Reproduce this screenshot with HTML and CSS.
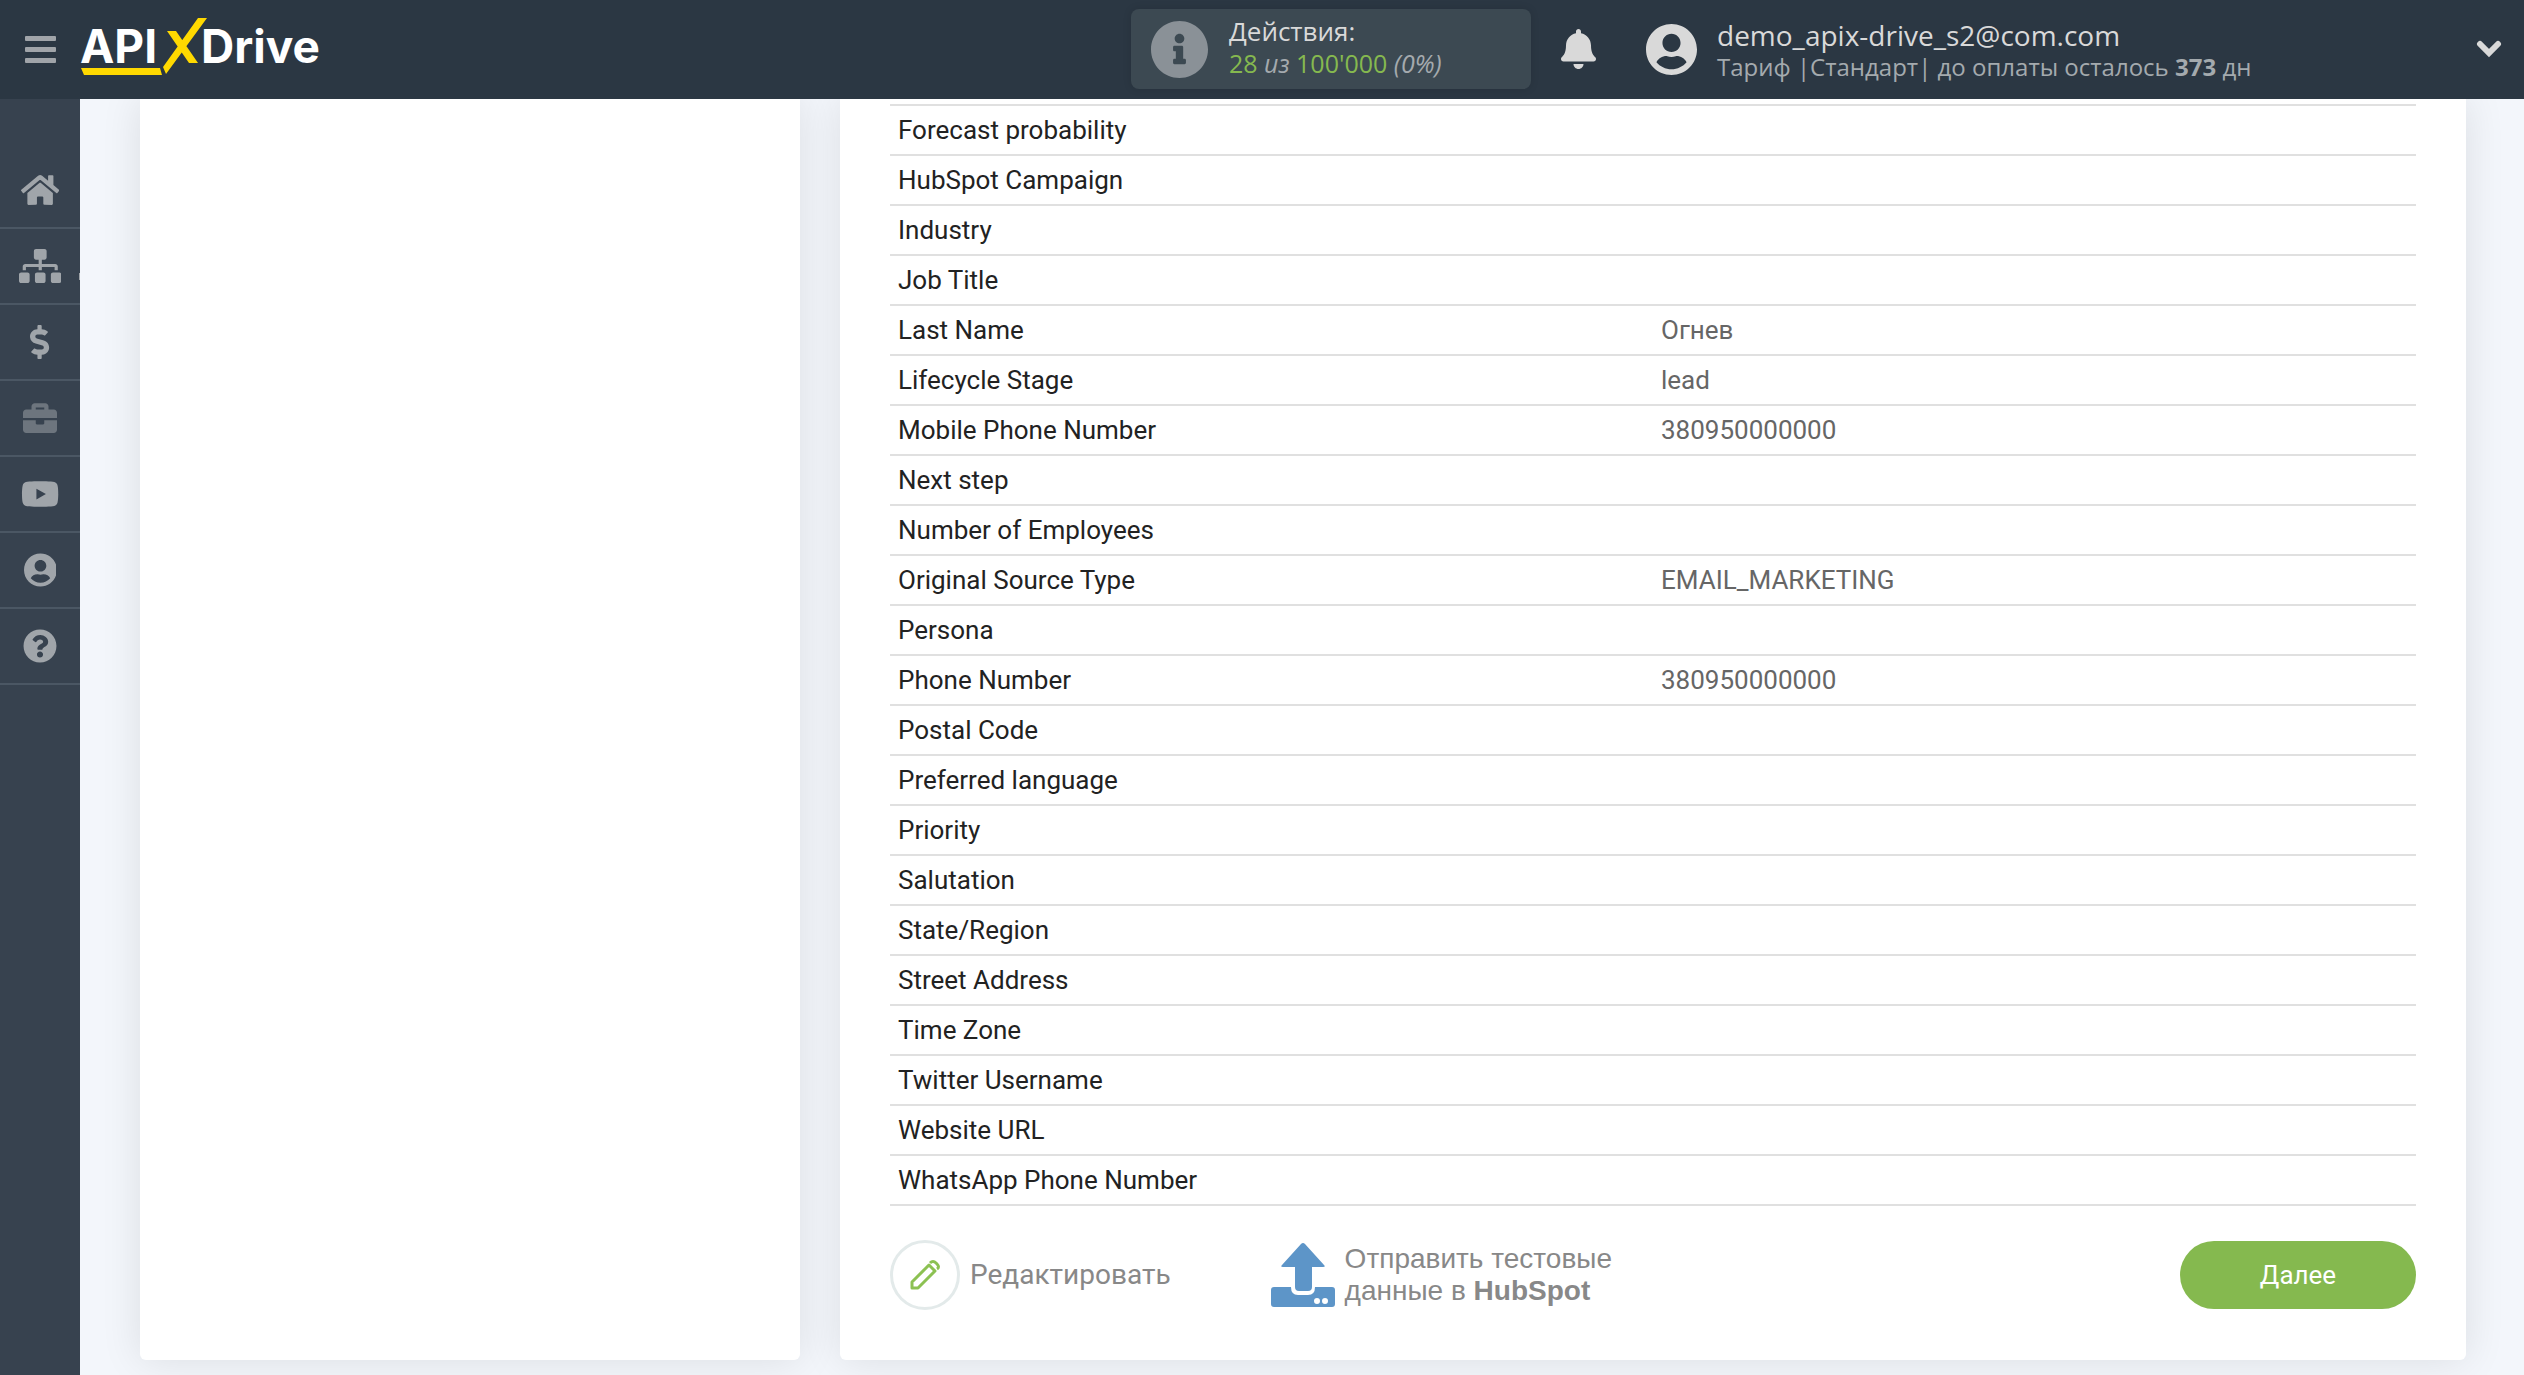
FILE: index.html
```html
<!DOCTYPE html>
<html lang="ru">
<head>
<meta charset="utf-8">
<title>ApiX-Drive</title>
<link rel="stylesheet" href="styles.css">
</head>
<body>
<header class="topbar">
  <button class="burger" type="button" aria-label="Меню"><span></span><span></span><span></span></button>
  <a class="logo" href="#" aria-label="APIX-Drive">
    <svg viewBox="0 0 246 60" width="246" height="60">
      <text class="logo-text" x="0" y="44">API</text>
      <path class="logo-accent" d="M87 12h9l22 32h-9zM118 -1h9L86 55l-3-7zM1 49h79l2 7H4z"/>
      <text class="logo-text" x="121" y="44">Drive</text>
    </svg>
  </a>
  <div class="usage">
    <svg class="usage-icon" viewBox="8 8 496 496"><path d="M256 8C119.043 8 8 119.083 8 256c0 136.997 111.043 248 248 248s248-111.003 248-248C504 119.083 392.957 8 256 8zm0 110c23.196 0 42 18.804 42 42s-18.804 42-42 42-42-18.804-42-42 18.804-42 42-42zm56 254c0 6.627-5.373 12-12 12h-88c-6.627 0-12-5.373-12-12v-24c0-6.627 5.373-12 12-12h12v-64h-12c-6.627 0-12-5.373-12-12v-24c0-6.627 5.373-12 12-12h64c6.627 0 12 5.373 12 12v100h12c6.627 0 12 5.373 12 12v24z"/></svg>
    <div class="usage-text">
      <div class="line-main">Действия:</div>
      <div class="line-sub"><b class="count">28</b> <i>из</i> <b class="count">100'000</b> <i>(0%)</i></div>
    </div>
  </div>
  <button class="bell" type="button" aria-label="Уведомления"><svg viewBox="0 0 448 512"><path d="M224 512c35.32 0 63.97-28.65 63.97-64H160.03c0 35.35 28.65 64 63.97 64zm215.39-149.71c-19.32-20.76-55.47-51.99-55.47-154.29 0-77.7-54.48-139.9-127.94-155.16V32c0-17.67-14.32-32-31.98-32s-31.98 14.33-31.98 32v20.84C118.56 68.1 64.08 130.3 64.08 208c0 102.3-36.15 133.53-55.47 154.29-6 6.45-8.66 14.16-8.61 21.71.11 16.4 12.98 32 32.1 32h383.8c19.12 0 32-15.6 32.1-32 .05-7.55-2.61-15.27-8.61-21.71z"/></svg></button>
  <div class="account">
    <svg class="avatar" viewBox="0 8 496 496"><path d="M248 8C111 8 0 119 0 256s111 248 248 248 248-111 248-248S385 8 248 8zm0 96c48.6 0 88 39.4 88 88s-39.4 88-88 88-88-39.4-88-88 39.4-88 88-88zm0 344c-58.7 0-111.3-26.6-146.5-68.2 18.8-35.4 55.6-59.8 98.5-59.8 2.4 0 4.8.4 7.1 1.1 13 4.2 26.6 6.9 40.9 6.9 14.3 0 28-2.7 40.9-6.9 2.3-.7 4.7-1.1 7.1-1.1 42.9 0 79.7 24.4 98.5 59.8C359.3 421.4 306.7 448 248 448z"/></svg>
    <div class="account-text">
      <div class="line-main">demo_apix-drive_s2@com.com</div>
      <div class="line-sub">Тариф |Стандарт| до оплаты осталось <b>373</b> дн</div>
    </div>
  </div>
  <button class="expand" type="button" aria-label="Развернуть"><svg viewBox="0 0 26 18"><path d="M4 4l9 9 9-9"/></svg></button>
</header>
<div class="shell">
  <nav class="sidebar">
    <a href="#" aria-label="Главная"><svg viewBox="0 0 576 512"><path d="M280.37 148.26L96 300.11V464a16 16 0 0 0 16 16l112.06-.29a16 16 0 0 0 15.92-16V368a16 16 0 0 1 16-16h64a16 16 0 0 1 16 16v95.64a16 16 0 0 0 16 16.05L464 480a16 16 0 0 0 16-16V300L295.67 148.26a12.19 12.19 0 0 0-15.3 0zM571.6 251.47L488 182.56V44.05a12 12 0 0 0-12-12h-56a12 12 0 0 0-12 12v72.61L318.47 43a48 48 0 0 0-61 0L4.34 251.47a12 12 0 0 0-1.6 16.9l25.5 31A12 12 0 0 0 45.15 301l235.22-193.74a12.19 12.19 0 0 1 15.3 0L530.9 301a12 12 0 0 0 16.9-1.6l25.5-31a12 12 0 0 0-1.7-16.93z"/></svg></a>
    <a class="has-more" href="#" aria-label="Связи"><svg viewBox="0 0 640 512"><path d="M128 352H32c-17.67 0-32 14.33-32 32v96c0 17.67 14.33 32 32 32h96c17.67 0 32-14.33 32-32v-96c0-17.67-14.33-32-32-32zm-24-80h192v48h48v-48h192v48h48v-57.59c0-21.17-17.23-38.41-38.41-38.41H344v-64h40c17.67 0 32-14.33 32-32V32c0-17.67-14.33-32-32-32H256c-17.67 0-32 14.33-32 32v96c0 17.67 14.33 32 32 32h40v64H94.41C73.23 224 56 241.23 56 262.41V320h48v-48zm264 80h-96c-17.67 0-32 14.33-32 32v96c0 17.67 14.33 32 32 32h96c17.67 0 32-14.33 32-32v-96c0-17.67-14.33-32-32-32zm240 0h-96c-17.67 0-32 14.33-32 32v96c0 17.67 14.33 32 32 32h96c17.67 0 32-14.33 32-32v-96c0-17.67-14.33-32-32-32z"/></svg></a>
    <a href="#" aria-label="Оплата"><svg viewBox="0 0 288 512"><path d="M209.2 233.4l-108-31.6C88.7 198.2 80 186.5 80 173.5c0-16.3 13.2-29.5 29.5-29.5h66.3c12.2 0 24.2 3.7 34.2 10.5 6.1 4.1 14.3 3.1 19.5-2l34.8-34c7.1-6.9 6.1-18.4-1.8-24.5C238 74.8 207.4 64.1 176 64V16c0-8.8-7.2-16-16-16h-32c-8.8 0-16 7.2-16 16v48h-2.5C45.8 64-5.4 118.7.5 183.6c4.2 46.1 39.4 83.6 83.8 96.6l102.5 30c12.5 3.7 21.2 15.3 21.2 28.3 0 16.3-13.2 29.5-29.5 29.5h-66.3C100 368 88 364.3 78 357.5c-6.1-4.1-14.3-3.1-19.5 2l-34.8 34c-7.1 6.9-6.1 18.4 1.8 24.5 24.5 19.2 55.1 29.9 86.5 30v48c0 8.8 7.2 16 16 16h32c8.8 0 16-7.2 16-16v-48.2c46.6-.9 90.3-28.6 105.7-72.7 21.5-61.6-14.6-124.8-72.5-141.7z"/></svg></a>
    <a class="muted" href="#" aria-label="Проекты"><svg viewBox="0 0 512 512"><path d="M320 336c0 8.84-7.16 16-16 16h-96c-8.84 0-16-7.16-16-16v-48H0v144c0 25.6 22.4 48 48 48h416c25.6 0 48-22.4 48-48V288H320v48zm144-208h-80V80c0-25.6-22.4-48-48-48H176c-25.6 0-48 22.4-48 48v48H48c-25.6 0-48 22.4-48 48v80h512v-80c0-25.6-22.4-48-48-48zm-144 0H192V96h128v32z"/></svg></a>
    <a href="#" aria-label="Видео"><svg viewBox="0 0 576 512"><path d="M549.655 124.083c-6.281-23.65-24.787-42.276-48.284-48.597C458.781 64 288 64 288 64S117.22 64 74.629 75.486c-23.497 6.322-42.003 24.947-48.284 48.597-11.412 42.867-11.412 132.305-11.412 132.305s0 89.438 11.412 132.305c6.281 23.65 24.787 41.5 48.284 47.821C117.22 448 288 448 288 448s170.78 0 213.371-11.486c23.497-6.321 42.003-24.171 48.284-47.821 11.412-42.867 11.412-132.305 11.412-132.305s0-89.438-11.412-132.305zm-317.51 213.508V175.185l142.739 81.205-142.739 81.201z"/></svg></a>
    <a href="#" aria-label="Профиль"><svg viewBox="0 0 496 512"><path d="M248 8C111 8 0 119 0 256s111 248 248 248 248-111 248-248S385 8 248 8zm0 96c48.6 0 88 39.4 88 88s-39.4 88-88 88-88-39.4-88-88 39.4-88 88-88zm0 344c-58.7 0-111.3-26.6-146.5-68.2 18.8-35.4 55.6-59.8 98.5-59.8 2.4 0 4.8.4 7.1 1.1 13 4.2 26.6 6.9 40.9 6.9 14.3 0 28-2.7 40.9-6.9 2.3-.7 4.7-1.1 7.1-1.1 42.9 0 79.7 24.4 98.5 59.8C359.3 421.4 306.7 448 248 448z"/></svg></a>
    <a href="#" aria-label="Помощь"><svg viewBox="0 0 512 512"><path d="M504 256c0 136.997-111.043 248-248 248S8 392.997 8 256C8 119.083 119.043 8 256 8s248 111.083 248 248zM262.655 90c-54.497 0-89.255 22.957-116.549 63.758-3.536 5.286-2.353 12.415 2.715 16.258l34.699 26.31c5.205 3.947 12.621 3.008 16.665-2.122 17.864-22.658 30.113-35.797 57.303-35.797 20.429 0 45.698 13.148 45.698 32.958 0 14.976-12.363 22.667-32.534 33.976C247.128 238.528 216 254.941 216 296v4c0 6.627 5.373 12 12 12h56c6.627 0 12-5.373 12-12v-1.333c0-28.462 83.186-29.647 83.186-106.667 0-58.002-60.165-102-116.531-102zM256 338c-25.365 0-46 20.635-46 46 0 25.364 20.635 46 46 46s46-20.636 46-46c0-25.365-20.635-46-46-46z"/></svg></a>
  </nav>
  <main class="content">
    <section class="card steps"></section>
    <section class="card details">
      <table class="fields">
        <tbody>
          <tr><th scope="row">Forecast probability</th><td></td></tr>
          <tr><th scope="row">HubSpot Campaign</th><td></td></tr>
          <tr><th scope="row">Industry</th><td></td></tr>
          <tr><th scope="row">Job Title</th><td></td></tr>
          <tr><th scope="row">Last Name</th><td>Огнев</td></tr>
          <tr><th scope="row">Lifecycle Stage</th><td>lead</td></tr>
          <tr><th scope="row">Mobile Phone Number</th><td>380950000000</td></tr>
          <tr><th scope="row">Next step</th><td></td></tr>
          <tr><th scope="row">Number of Employees</th><td></td></tr>
          <tr><th scope="row">Original Source Type</th><td>EMAIL_MARKETING</td></tr>
          <tr><th scope="row">Persona</th><td></td></tr>
          <tr><th scope="row">Phone Number</th><td>380950000000</td></tr>
          <tr><th scope="row">Postal Code</th><td></td></tr>
          <tr><th scope="row">Preferred language</th><td></td></tr>
          <tr><th scope="row">Priority</th><td></td></tr>
          <tr><th scope="row">Salutation</th><td></td></tr>
          <tr><th scope="row">State/Region</th><td></td></tr>
          <tr><th scope="row">Street Address</th><td></td></tr>
          <tr><th scope="row">Time Zone</th><td></td></tr>
          <tr><th scope="row">Twitter Username</th><td></td></tr>
          <tr><th scope="row">Website URL</th><td></td></tr>
          <tr><th scope="row">WhatsApp Phone Number</th><td></td></tr>
        </tbody>
      </table>
      <div class="actions">
        <a class="action edit" href="#">
          <span class="ring"><svg viewBox="0 0 30 30"><path d="M2 28v-6L19 5l6 6L8 28zM20 3q3-3 6 0l1 1q3 3 0 5"/></svg></span>
          Редактировать
        </a>
        <a class="action send" href="#">
          <svg viewBox="0 0 64 64"><path d="M32 0q1 0 2 1l19 21q2 2-1 2H41v20q0 4-4 4H28q-4 0-4-4V24H12q-3 0-1-2L30 1q1-1 2-1z"/><path fill-rule="evenodd" d="M3 44h17q0 8 7 8h10q7 0 7-8h17q3 0 3 3v14q0 3-3 3H3q-3 0-3-3V47q0-3 3-3zM46 55a3 3 0 1 0 0 6 3 3 0 0 0 0-6zm8 0a3 3 0 1 0 0 6 3 3 0 0 0 0-6z"/></svg>
          <span>Отправить тестовые<br>данные в <b>HubSpot</b></span>
        </a>
        <button class="next" type="button">Далее</button>
      </div>
    </section>
  </main>
</div>
</body>
</html>
```
FILE: styles.css
```css
* { box-sizing: border-box; }
body {
  margin: 0;
  background: #f3f6fb;
  font-family: Roboto, sans-serif;
  font-size: 26px;
  color: #222;
}
button { padding: 0; border: 0; background: none; font: inherit; cursor: pointer; }
a { color: inherit; text-decoration: none; }
svg { display: block; fill: currentColor; }

.topbar {
  position: sticky;
  top: 0;
  z-index: 2;
  display: flex;
  align-items: center;
  height: 99px;
  padding: 0 22px 1px 25px;
  background: #2b3743;
  color: #d9d9d9;
  font-family: "Open Sans", sans-serif;
}
.burger { display: flex; flex-direction: column; gap: 6px; width: 31px; }
.burger span { height: 5px; border-radius: 1px; background: #a0a4a9; }
.logo { margin-left: 24px; }
.logo svg { overflow: visible; }
.logo-text { font: 700 46px Inter, sans-serif; fill: #fff; }
.logo-accent { fill: #ffd900; }
.usage {
  display: flex;
  align-items: center;
  gap: 21px;
  width: 400px;
  height: 80px;
  margin-left: auto;
  padding: 0 20px;
  border-radius: 8px;
  background: #3c4952;
  box-shadow: 0 0 8px rgba(0, 0, 0, .12);
}
.usage-icon { width: 57px; height: 57px; color: #8a9197; }
.usage-text { padding-bottom: 4px; font-size: 26px; }
.line-main, .line-sub { line-height: 32px; }
.line-sub { font-size: 25px; color: #a4aaae; }
.count { font-weight: 400; color: #86b94f; }
.bell { width: 35px; height: 40px; margin-left: 30px; color: inherit; }
.bell svg { height: 40px; }
.account { display: flex; align-items: center; gap: 20px; width: 780px; margin-left: 50px; }
.avatar { width: 51px; height: 51px; }
.account-text { padding-top: 4px; font-size: 28px; }
.account .line-sub { font-size: 24px; }
.expand { width: 26px; margin-left: 50px; }
.expand path { fill: none; stroke: #d9d9d9; stroke-width: 6; stroke-linecap: round; }

.shell { display: flex; min-height: calc(100vh - 99px); }
.sidebar { width: 80px; padding-top: 54px; background: #37424f; color: #a0a5aa; }
.sidebar a {
  position: relative;
  display: flex;
  align-items: center;
  justify-content: center;
  height: 76px;
  border-bottom: 2px solid #4b5764;
}
.sidebar svg { height: 34px; }
.sidebar .muted { color: #6d757e; }
.has-more::after {
  content: "";
  position: absolute;
  right: 0;
  bottom: 23px;
  width: 1px;
  height: 7px;
  background: currentColor;
}

.content { display: flex; flex: 1; gap: 40px; padding: 0 58px 15px 60px; }
.card {
  border-radius: 0 0 6px 6px;
  background: #fff;
  box-shadow: 0 0 40px rgba(0, 0, 0, .1);
}
.steps { flex: 660 1 0; }
.details { flex: 1526 1 0; padding: 5px 50px 50px; }
.fields { width: 100%; border-collapse: separate; border-spacing: 0; border-top: 2px solid #e0e0e0; table-layout: fixed; }
.fields th, .fields td {
  height: 50px;
  padding: 0 8px;
  border-bottom: 2px solid #e0e0e0;
  font-weight: 400;
  line-height: 48px;
  text-align: left;
}
.fields td { color: #666; }

.actions { display: flex; align-items: center; margin-top: 34px; }
.action { display: flex; align-items: center; gap: 10px; font-size: 28px; line-height: 32px; color: #888; }
.send { margin-left: 100px; font-family: "Liberation Sans", sans-serif; }
.send svg { width: 64px; height: 64px; color: #5d95c8; }
.ring {
  display: flex;
  align-items: center;
  justify-content: center;
  width: 70px;
  height: 70px;
  border: 3px solid #e3eaea;
  border-radius: 50%;
}
.ring svg { width: 30px; height: 30px; fill: none; stroke: #8cc152; stroke-width: 3; stroke-linejoin: round; }
.next {
  width: 236px;
  height: 68px;
  margin-left: auto;
  border-radius: 34px;
  background: #85b94f;
  color: #fff;
}
```
